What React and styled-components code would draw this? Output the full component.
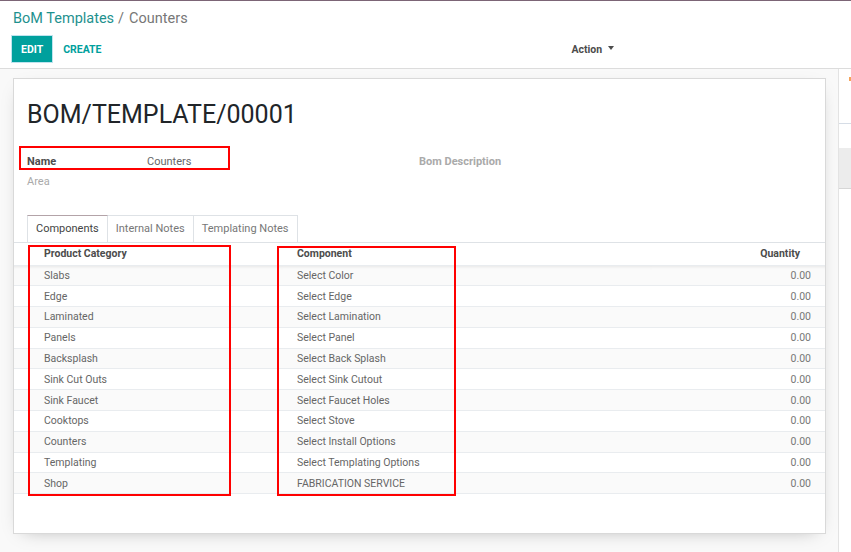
import React from 'react'
import styled, { createGlobalStyle } from 'styled-components'

const GlobalStyle = createGlobalStyle`
    html, body { margin: 0; padding: 0; }
    body {
        font-family: Roboto, "Noto Sans", sans-serif;
        background: #fff;
        color: #4c4c4c;
    }
`

const rows = [
    ['Slabs', 'Select Color'],
    ['Edge', 'Select Edge'],
    ['Laminated', 'Select Lamination'],
    ['Panels', 'Select Panel'],
    ['Backsplash', 'Select Back Splash'],
    ['Sink Cut Outs', 'Select Sink Cutout'],
    ['Sink Faucet', 'Select Faucet Holes'],
    ['Cooktops', 'Select Stove'],
    ['Counters', 'Select Install Options'],
    ['Templating', 'Select Templating Options'],
    ['Shop', 'FABRICATION SERVICE'],
]

const Page = styled.div`
    width: 851px;
    height: 552px;
    display: flex;
    flex-direction: column;
    border-top: 1px solid #7c6576;
    box-sizing: border-box;
    overflow: hidden;
`

const ControlPanel = styled.div`
    height: 68px;
    flex: none;
    padding: 8px 0 0 11px;
    box-sizing: border-box;
    border-bottom: 1px solid #dcdcdc;
    background: #fff;
`

const Breadcrumb = styled.div`
    font-size: 14.5px;
    line-height: 20px;
    padding-left: 2px;
    color: #777;
    a {
        color: #1e918e;
        text-decoration: none;
    }
    span { margin: 0 5px 0 4px; }
`

const ButtonRow = styled.div`
    display: flex;
    align-items: center;
    margin-top: 7px;
`

const Btn = styled.button`
    font-family: inherit;
    font-size: 10.5px;
    font-weight: 700;
    height: 26px;
    padding: 0 8px;
    border-radius: 0;
    cursor: pointer;
    border: 1px solid ${p => p.primary ? '#00a09d' : 'transparent'};
    background: ${p => p.primary ? '#00a09d' : 'transparent'};
    color: ${p => p.primary ? '#fff' : '#00a09d'};
    box-shadow: ${p => p.primary ? '0 0 0 1px #bfe3ee' : 'none'};
    margin-left: ${p => p.primary ? '1px' : '2px'};
`

const ActionMenu = styled.div`
    margin-left: 461px;
    font-size: 10.5px;
    font-weight: 700;
    color: #4c4c4c;
    display: flex;
    align-items: center;
    gap: 6px;
    &::after {
        content: '';
        border-left: 3.5px solid transparent;
        border-right: 3.5px solid transparent;
        border-top: 4px solid #4c4c4c;
        margin-top: -2px;
    }
`

const Body = styled.div`
    flex: 1;
    display: flex;
    background: #f9f9f9;
`

const FormArea = styled.div`
    width: 838px;
    flex: none;
    padding: 9px 12px 0 13px;
    box-sizing: border-box;
`

const Sheet = styled.div`
    height: 456px;
    background: #fff;
    border: 1px solid #d9d9d9;
    box-sizing: border-box;
    box-shadow: 0 5px 18px -10px rgba(0, 0, 0, 0.35);
    padding: 19px 0 0 0;
`

const Title = styled.h1`
    margin: 0 0 0 13px;
    font-size: 25px;
    font-weight: 400;
    line-height: 34px;
    color: #212529;
`

const Fields = styled.div`
    display: grid;
    grid-template-columns: 392px 1fr;
    margin: 20px 0 0 13px;
`

const FieldRow = styled.div`
    position: relative;
    display: grid;
    grid-template-columns: 120px 1fr;
    font-size: 11px;
    line-height: 20px;
`

const Label = styled.div`
    font-weight: ${p => p.light ? 400 : 700};
    color: ${p => p.muted ? '#aaa' : '#4c4c4c'};
`

const Value = styled.div`
    color: #666;
`

const Highlight = styled.div`
    position: absolute;
    border: 2px solid #f00;
    pointer-events: none;
    box-sizing: border-box;
`

const Tabs = styled.div`
    display: flex;
    margin-top: 23px;
    padding-left: 13px;
    border-bottom: 1px solid #dee2e6;
`

const Tab = styled.div`
    height: 26px;
    line-height: 26px;
    padding: 0 8px;
    font-size: 11px;
    color: ${p => p.active ? '#444' : '#777'};
    border: 1px solid #dee2e6;
    border-top-color: ${p => p.active ? '#b3a3a8' : '#dee2e6'};
    border-bottom: none;
    margin-bottom: ${p => p.active ? '-1px' : '0'};
    background: #fff;
    & + & { border-left: none; }
`

const TableWrap = styled.div`
    position: relative;
`

const Table = styled.table`
    width: 100%;
    border-collapse: collapse;
    font-size: 10.5px;
    th, td {
        height: 20.8px;
        padding: 0;
        border-bottom: 1px solid #e9ecef;
        box-sizing: border-box;
    }
    th {
        height: 22px;
        font-weight: 700;
        color: #4c4c4c;
        text-align: left;
    }
    td { color: #666; }
    tbody tr:nth-child(odd) td { background: #fafafa; }
    tbody tr:first-child td {
        box-shadow: inset 0 3px 3px -2px rgba(0, 0, 0, 0.08);
    }
`

const CatCell = styled.td`
    width: 268px;
    padding-left: 30px !important;
`

const CatHead = styled.th`
    width: 268px;
    padding-left: 30px !important;
`

const CompCell = styled.td`
    padding-left: 15px !important;
`

const CompHead = styled.th`
    padding-left: 15px !important;
`

const QtyCell = styled.td`
    text-align: right;
    padding-right: 14px !important;
    color: #777 !important;
`

const QtyHead = styled.th`
    text-align: right !important;
    padding-right: 25px !important;
`

const Chatter = styled.div`
    flex: 1;
    background: #fff;
    border-left: 1px solid #e3e3e3;
    display: flex;
    flex-direction: column;
`

const ChatterTop = styled.div`
    height: 54px;
    border-bottom: 1px solid #d6dde6;
    position: relative;
    &::after {
        content: '';
        position: absolute;
        right: 0;
        top: 8px;
        width: 2px;
        height: 4px;
        background: #f5a35b;
    }
`

const ChatterBox = styled.div`
    margin-top: 24px;
    height: 40px;
    background: #ececec;
    border-bottom: 1px solid #d6d6d6;
`

export default function App() {
    return (
        <>
            <GlobalStyle />
            <Page>
                <ControlPanel>
                    <Breadcrumb>
                        <a href="#">BoM Templates</a><span>/</span>Counters
                    </Breadcrumb>
                    <ButtonRow>
                        <Btn primary>EDIT</Btn>
                        <Btn>CREATE</Btn>
                        <ActionMenu>Action</ActionMenu>
                    </ButtonRow>
                </ControlPanel>
                <Body>
                    <FormArea>
                        <Sheet>
                            <Title>BOM/TEMPLATE/00001</Title>
                            <Fields>
                                <div>
                                    <FieldRow>
                                        <Label>Name</Label>
                                        <Value>Counters</Value>
                                        <Highlight style={{ left: -8, top: -6, width: 211, height: 24 }} />
                                    </FieldRow>
                                    <FieldRow>
                                        <Label muted light>Area</Label>
                                        <Value />
                                    </FieldRow>
                                </div>
                                <div>
                                    <FieldRow>
                                        <Label muted>Bom Description</Label>
                                        <Value />
                                    </FieldRow>
                                </div>
                            </Fields>
                            <Tabs>
                                <Tab active>Components</Tab>
                                <Tab>Internal Notes</Tab>
                                <Tab>Templating Notes</Tab>
                            </Tabs>
                            <TableWrap>
                                <Table>
                                    <thead>
                                        <tr>
                                            <CatHead>Product Category</CatHead>
                                            <CompHead>Component</CompHead>
                                            <QtyHead>Quantity</QtyHead>
                                        </tr>
                                    </thead>
                                    <tbody>
                                        {rows.map(([cat, comp]) => (
                                            <tr key={cat}>
                                                <CatCell>{cat}</CatCell>
                                                <CompCell>{comp}</CompCell>
                                                <QtyCell>0.00</QtyCell>
                                            </tr>
                                        ))}
                                    </tbody>
                                </Table>
                                <Highlight style={{ left: 14, top: 2, width: 203, height: 251 }} />
                                <Highlight style={{ left: 263, top: 3, width: 179, height: 250 }} />
                            </TableWrap>
                        </Sheet>
                    </FormArea>
                    <Chatter>
                        <ChatterTop />
                        <ChatterBox />
                    </Chatter>
                </Body>
            </Page>
        </>
    )
}
